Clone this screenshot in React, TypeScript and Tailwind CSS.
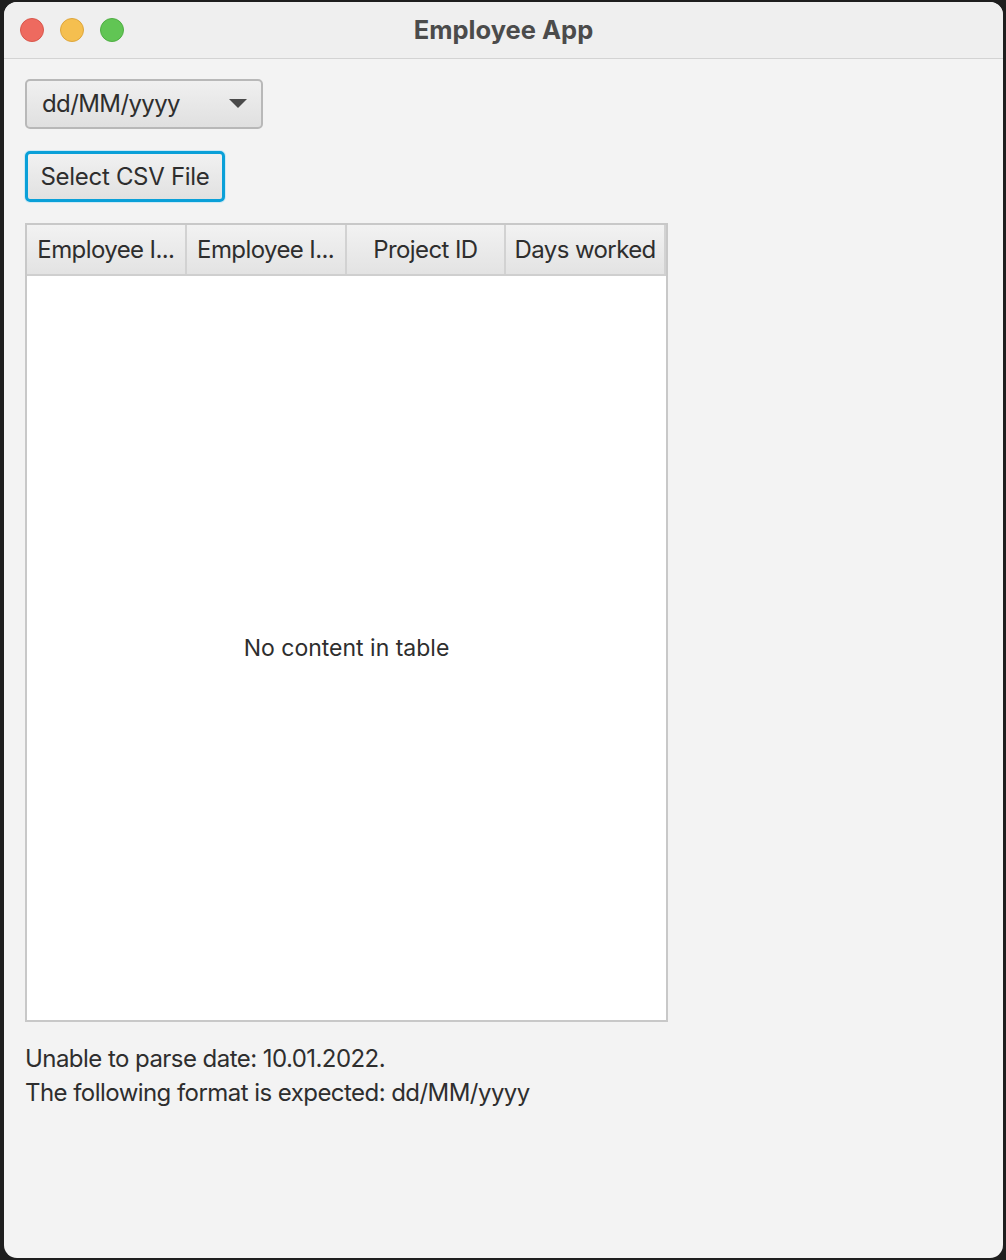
import { useState } from 'react';

const columns = ['Employee I...', 'Employee I...', 'Project ID', 'Days worked'];

function TrafficLights() {
    return (
        <div className="absolute left-[16px] top-[16px] flex gap-[16px]">
            <span className="w-[24px] h-[24px] rounded-full bg-[#ee6a5f] border border-[#d9574c]" />
            <span className="w-[24px] h-[24px] rounded-full bg-[#f5bf4f] border border-[#dea63b]" />
            <span className="w-[24px] h-[24px] rounded-full bg-[#61c554] border border-[#4fae43]" />
        </div>
    );
}

export default function App() {
    const [format] = useState('dd/MM/yyyy');

    return (
        <div className="w-[1006px] h-[1260px] bg-[#1e1e1e] pl-[4px] pr-[3px] pt-[2px] pb-[2px] font-['Inter','Liberation_Sans',sans-serif] text-[#2b2b2b]">
            <div className="h-full flex flex-col rounded-[13px] overflow-hidden bg-[#f3f3f3]">
                {/* Title bar */}
                <div className="relative h-[57px] shrink-0 bg-[#efefef] border-b border-[#d3d3d3] flex items-center justify-center">
                    <TrafficLights />
                    <span className="text-[25.5px] font-bold text-[#4b4b4b]">Employee App</span>
                </div>

                {/* Content */}
                <div className="flex flex-col items-start px-[21px] pt-[20px]">
                    <button className="w-[238px] h-[50px] rounded-[5px] border-2 border-[#b8b8b8] bg-gradient-to-b from-[#f0f0f0] to-[#e0e0e0] flex items-center justify-between pl-[15px] pr-[14px] text-[24px] tracking-[-0.6px] text-[#2e2e2e]">
                        <span>{format}</span>
                        <svg width="18" height="10" viewBox="0 0 18 10">
                            <path d="M0 0 L18 0 L9 9 Z" fill="#4a4a4a" />
                        </svg>
                    </button>

                    <button className="mt-[22px] w-[200px] h-[51px] rounded-[5px] border-[3px] border-[#0aa0d8] bg-gradient-to-b from-[#f1f1f1] to-[#e1e1e1] shadow-[0_0_0_1px_#cde9f5] text-[24px] tracking-[-0.3px] text-[#2e2e2e] flex items-center justify-center">
                        Select CSV File
                    </button>

                    {/* Table */}
                    <div className="mt-[21px] w-[643px] h-[799px] border-2 border-[#c8c8c8] bg-white flex flex-col">
                        <div className="h-[51px] shrink-0 flex bg-[#ececec] border-b-2 border-[#cfcfcf]">
                            {columns.map((c, i) => (
                                <div
                                    key={i}
                                    className="w-[160px] h-full flex items-center justify-center border-r-2 border-[#d2d2d2] bg-gradient-to-b from-[#f2f2f2] to-[#e3e3e3] text-[24px] tracking-[-0.6px] text-[#2e2e2e]"
                                >
                                    {c}
                                </div>
                            ))}
                        </div>
                        <div className="flex-1 flex items-center justify-center text-[23px] text-[#2e2e2e]">
                            No content in table
                        </div>
                    </div>

                    <div className="mt-[20px] text-[24px] leading-[34px] tracking-[-0.55px] text-[#2e2e2e]">
                        <p>Unable to parse date: 10.01.2022.</p>
                        <p>The following format is expected: dd/MM/yyyy</p>
                    </div>
                </div>
            </div>
        </div>
    );
}
